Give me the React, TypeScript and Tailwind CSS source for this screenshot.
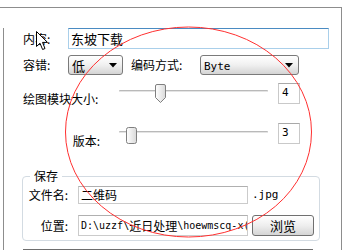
import React from 'react'

const cjk = "font-['Noto_Sans_CJK_SC',sans-serif]"
const mono = "font-['DejaVu_Sans_Mono','Liberation_Mono',monospace]"

function Select({ value, width }: { value: React.ReactNode; width: string }) {
  return (
    <div
      className={`${width} h-[20px] flex items-center justify-between rounded-[3px] border border-[#7a7a7a] bg-gradient-to-b from-white via-[#f0f0f0] to-[#d4d4d4] pl-[3px] pr-[5px]`}
    >
      <span className="leading-none">{value}</span>
      <svg width="8" height="5" viewBox="0 0 8 5">
        <path d="M0 0H8L4 4.5Z" fill="#000" />
      </svg>
    </div>
  )
}

function Slider({ pos, pointed, trackTop, thumbTop }: { pos: number; pointed: boolean; trackTop: string; thumbTop: string }) {
  return (
    <div className="relative w-[149px] h-full">
      <div className={`${trackTop} h-[2px] w-full rounded-full bg-[#b9b9b9] border-b border-[#e4e4e4]`} />
      <div className={`absolute ${thumbTop}`} style={{ left: pos }}>
        {pointed ? (
          <svg width="11" height="19" viewBox="0 0 11 19">
            <defs>
              <linearGradient id="tg1" x1="0" x2="1">
                <stop offset="0" stopColor="#ffffff" />
                <stop offset="1" stopColor="#d9d9d9" />
              </linearGradient>
            </defs>
            <path d="M0.5 2Q0.5 0.5 2 0.5H9Q10.5 0.5 10.5 2V13.5L5.5 18.5L0.5 13.5Z" fill="url(#tg1)" stroke="#7f7f7f" />
          </svg>
        ) : (
          <svg width="11" height="17" viewBox="0 0 11 17">
            <defs>
              <linearGradient id="tg2" x1="0" x2="1">
                <stop offset="0" stopColor="#ffffff" />
                <stop offset="1" stopColor="#d9d9d9" />
              </linearGradient>
            </defs>
            <rect x="0.5" y="0.5" width="10" height="16" rx="2" fill="url(#tg2)" stroke="#7f7f7f" />
          </svg>
        )}
      </div>
    </div>
  )
}

function NumBox({ value }: { value: string }) {
  return (
    <div className={`w-[22px] h-[21px] border border-[#c9c9c9] border-t-[#a9a9a9] bg-white pl-[3px] flex items-center text-[11px] ${mono}`}>
      {value}
    </div>
  )
}

export default function App() {
  return (
    <div className={`relative w-[353px] h-[250px] overflow-hidden bg-white text-[12px] text-black ${cjk}`}>
      <div className="mt-[7px] w-[342px] h-[243px] border-t border-r border-[#8d8d8d]">
        <div className="ml-[3px] mt-[20px] h-[230px] border-l border-[#8d8d8d] pl-[19px]">
          {/* 内容 */}
          <div className="flex items-center h-[21px]">
            <span className="w-[45px]">内容:</span>
            <div className="w-[261px] h-[21px] border border-[#a9cfea] border-t-[#4a8bc2] pl-[2px] flex items-center text-[13px]">
              东坡下载
            </div>
          </div>

          {/* 容错 / 编码方式 */}
          <div className="flex items-center h-[20px] mt-[6px]">
            <span className="w-[45px]">容错:</span>
            <Select width="w-[55px]" value={<span className="text-[13px]">低</span>} />
            <span className="ml-[8px] w-[69px]">编码方式:</span>
            <Select width="w-[99px]" value={<span className={`text-[11px] ${mono}`}>Byte</span>} />
          </div>

          {/* 绘图模块大小 */}
          <div className="flex h-[21px] mt-[8px]">
            <span className="w-[96px] mt-[8px] leading-[15px]">绘图模块大小:</span>
            <Slider pos={36} pointed trackTop="mt-[7px]" thumbTop="top-[1px]" />
            <div className="ml-[10px]">
              <NumBox value="4" />
            </div>
          </div>

          {/* 版本 */}
          <div className="flex h-[21px] mt-[19px]">
            <span className="w-[96px] mt-[10px] leading-[15px] text-right pr-[19px]">版本:</span>
            <Slider pos={7} pointed={false} trackTop="mt-[8px]" thumbTop="top-[4px]" />
            <div className="ml-[10px]">
              <NumBox value="3" />
            </div>
          </div>

          {/* 保存 */}
          <fieldset className="-ml-[1px] mt-[25px] w-[298px] h-[72px] rounded-[4px] border border-[#d3dbe2] px-[4px]">
            <legend className="ml-[3px] px-[4px] leading-[14px] text-[12px]">保存</legend>
            <div className="flex items-center h-[18px] mt-[3px]">
              <span className="w-[51px] text-right pr-[10px]">文件名:</span>
              <div className="w-[170px] h-[18px] border border-[#cbcbcb] border-t-[#b0b0b0] pl-[2px] flex items-center">二维码</div>
              <span className={`ml-[4px] text-[11px] ${mono}`}>.jpg</span>
            </div>
            <div className="flex items-center h-[21px] mt-[11px]">
              <span className="w-[51px] text-right pr-[10px]">位置:</span>
              <div className={`w-[170px] h-[21px] border border-[#cbcbcb] border-t-[#b0b0b0] pl-[2px] flex items-center overflow-hidden whitespace-nowrap text-[10px] ${mono}`}>
                D:\uzzf\<span className={`text-[12px] ${cjk}`}>近日处理</span>\hoewmscq-x(
              </div>
              <button className="ml-[4px] w-[62px] h-[21px] rounded-[3px] border border-[#707070] bg-gradient-to-b from-white via-[#eeeeee] to-[#d5d5d5] text-[13px] leading-none">
                浏览
              </button>
            </div>
          </fieldset>

          <div className="mt-[8px] w-[290px] border-t-2 border-[#6e6e6e]" />
        </div>
      </div>

      {/* red annotation ellipse */}
      <svg className="absolute left-0 top-0 pointer-events-none" width="353" height="250">
        <ellipse cx="188.5" cy="132" rx="123" ry="105" fill="none" stroke="#ff3030" strokeWidth="1" />
      </svg>

      {/* mouse cursor */}
      <svg className="absolute left-[36px] top-[31px] pointer-events-none" width="13" height="20" viewBox="0 0 13 20">
        <path d="M0.5 0.5V15.5L4 12.2L6.6 18.5L9 17.5L6.5 11.4H11.5Z" fill="#fff" stroke="#000" strokeWidth="1" strokeLinejoin="round" />
      </svg>
    </div>
  )
}
